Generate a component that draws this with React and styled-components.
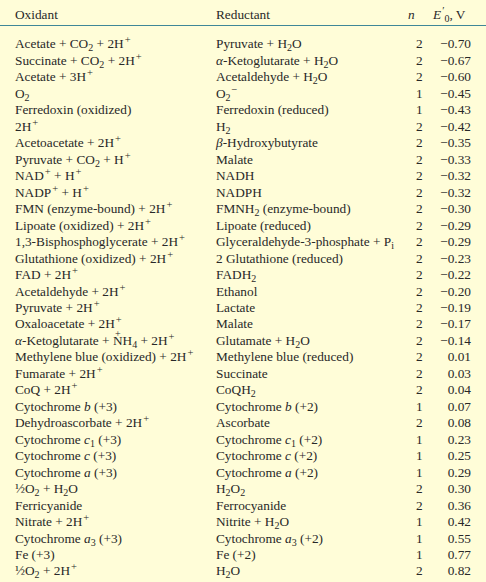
import React from 'react';
import styled, { createGlobalStyle } from 'styled-components';

const GlobalStyle = createGlobalStyle`
  html, body {
    margin: 0;
    padding: 0;
    background: #fffdd8;
  }
  body {
    font-family: "Liberation Serif", "DejaVu Serif", serif;
    color: #282828;
  }
`;

const Page = styled.div`
  width: 486px;
  min-height: 582px;
  background: #fffdd8;
  font-size: 13.3px;
  line-height: 16.47px;
`;

const HeadRow = styled.div`
  display: grid;
  grid-template-columns: 201px 182px 35px 1fr;
  padding: 7px 15px 2px 15px;
  border-bottom: 1.6px solid #3f8798;
`;

const Body = styled.div`
  padding-top: 10px;
`;

const Row = styled.div`
  display: grid;
  grid-template-columns: 201px 182px 35px 1fr;
  padding: 0 15px;
  height: 16.47px;
  white-space: nowrap;
`;

const Cell = styled.div`
  text-align: ${(p) => p.$align || 'left'};
  padding-left: ${(p) => p.$pad || 0}px;
`;

const Sub = styled.sub`
  font-size: 10px;
  line-height: 0;
  vertical-align: -3px;
`;

const Sup = styled.sup`
  font-size: 10.5px;
  line-height: 0;
  vertical-align: 5px;
  padding-left: 1px;
`;

const It = styled.i`
  font-style: italic;
`;

const Charged = styled.span`
  position: relative;
  display: inline-block;
`;

const TopPlus = styled.span`
  position: absolute;
  left: 50%;
  top: -7px;
  transform: translateX(-50%);
  font-size: 10px;
`;

const H = (n) => <>H<Sub>{n}</Sub></>;
const Hp = (c) => <>{c}H<Sup>+</Sup></>;
const CO2 = <>CO<Sub>2</Sub></>;
const H2O = <>H<Sub>2</Sub>O</>;

const rows = [
  [<>Acetate + {CO2} + {Hp('2')}</>, <>Pyruvate + {H2O}</>, 2, '−0.70'],
  [<>Succinate + {CO2} + {Hp('2')}</>, <><It>α</It>-Ketoglutarate + {H2O}</>, 2, '−0.67'],
  [<>Acetate + {Hp('3')}</>, <>Acetaldehyde + {H2O}</>, 2, '−0.60'],
  [<>O<Sub>2</Sub></>, <>O<Sub>2</Sub><Sup>−</Sup></>, 1, '−0.45'],
  ['Ferredoxin (oxidized)', 'Ferredoxin (reduced)', 1, '−0.43'],
  [Hp('2'), H(2), 2, '−0.42'],
  [<>Acetoacetate + {Hp('2')}</>, <><It>β</It>-Hydroxybutyrate</>, 2, '−0.35'],
  [<>Pyruvate + {CO2} + {Hp('')}</>, 'Malate', 2, '−0.33'],
  [<>NAD<Sup>+</Sup> + {Hp('')}</>, 'NADH', 2, '−0.32'],
  [<>NADP<Sup>+</Sup> + {Hp('')}</>, 'NADPH', 2, '−0.32'],
  [<>FMN (enzyme-bound) + {Hp('2')}</>, <>FMN{H(2)} (enzyme-bound)</>, 2, '−0.30'],
  [<>Lipoate (oxidized) + {Hp('2')}</>, 'Lipoate (reduced)', 2, '−0.29'],
  [<>1,3-Bisphosphoglycerate + {Hp('2')}</>, <>Glyceraldehyde-3-phosphate + P<Sub>i</Sub></>, 2, '−0.29'],
  [<>Glutathione (oxidized) + {Hp('2')}</>, '2 Glutathione (reduced)', 2, '−0.23'],
  [<>FAD + {Hp('2')}</>, <>FAD{H(2)}</>, 2, '−0.22'],
  [<>Acetaldehyde + {Hp('2')}</>, 'Ethanol', 2, '−0.20'],
  [<>Pyruvate + {Hp('2')}</>, 'Lactate', 2, '−0.19'],
  [<>Oxaloacetate + {Hp('2')}</>, 'Malate', 2, '−0.17'],
  [
    <><It>α</It>-Ketoglutarate + <Charged>N<TopPlus>+</TopPlus></Charged>H<Sub>4</Sub> + {Hp('2')}</>,
    <>Glutamate + {H2O}</>,
    2,
    '−0.14',
  ],
  [<>Methylene blue (oxidized) + {Hp('2')}</>, 'Methylene blue (reduced)', 2, '0.01'],
  [<>Fumarate + {Hp('2')}</>, 'Succinate', 2, '0.03'],
  [<>CoQ + {Hp('2')}</>, <>CoQ{H(2)}</>, 2, '0.04'],
  [<>Cytochrome <It>b</It> (+3)</>, <>Cytochrome <It>b</It> (+2)</>, 1, '0.07'],
  [<>Dehydroascorbate + {Hp('2')}</>, 'Ascorbate', 2, '0.08'],
  [<>Cytochrome <It>c</It><Sub>1</Sub> (+3)</>, <>Cytochrome <It>c</It><Sub>1</Sub> (+2)</>, 1, '0.23'],
  [<>Cytochrome <It>c</It> (+3)</>, <>Cytochrome <It>c</It> (+2)</>, 1, '0.25'],
  [<>Cytochrome <It>a</It> (+3)</>, <>Cytochrome <It>a</It> (+2)</>, 1, '0.29'],
  [<>½O<Sub>2</Sub> + {H2O}</>, <>H<Sub>2</Sub>O<Sub>2</Sub></>, 2, '0.30'],
  ['Ferricyanide', 'Ferrocyanide', 2, '0.36'],
  [<>Nitrate + {Hp('2')}</>, <>Nitrite + {H2O}</>, 1, '0.42'],
  [<>Cytochrome <It>a</It><Sub>3</Sub> (+3)</>, <>Cytochrome <It>a</It><Sub>3</Sub> (+2)</>, 1, '0.55'],
  ['Fe (+3)', 'Fe (+2)', 1, '0.77'],
  [<>½O<Sub>2</Sub> + {Hp('2')}</>, H2O, 2, '0.82'],
];

export default function App() {
  return (
    <Page>
      <GlobalStyle />
      <HeadRow>
        <Cell>Oxidant</Cell>
        <Cell>Reductant</Cell>
        <Cell $pad={10}><It>n</It></Cell>
        <Cell>
          <It>E</It><Sup>′</Sup><Sub>0</Sub>, V
        </Cell>
      </HeadRow>
      <Body>
        {rows.map((r, i) => (
          <Row key={i}>
            <Cell>{r[0]}</Cell>
            <Cell>{r[1]}</Cell>
            <Cell $pad={18}>{r[2]}</Cell>
            <Cell $align="right">{r[3]}</Cell>
          </Row>
        ))}
      </Body>
    </Page>
  );
}
